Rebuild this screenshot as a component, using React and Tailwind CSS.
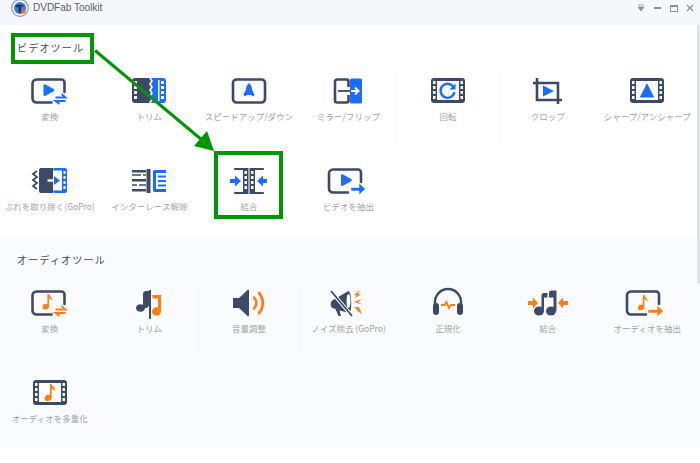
import React from 'react';

const DARK = '#3c4a68';
const BLUE = '#1a6dff';
const ORANGE = '#ff7f14';

// Screen outline with a notch at the bottom right, shared by convert/extract icons
const Screen = () => (
    <path d="M21 24.500H6a4 4 0 0 1-4-4V5.500a4 4 0 0 1 4-4h25a3 3 0 0 1 3 3V14" fill="none" stroke={DARK} strokeWidth="2.600" strokeLinecap="round" />
);

const Note = ({ x = 0, y = 0, s = 1, color = ORANGE }) => (
    <path transform={`translate(${x} ${y}) scale(${s})`} d="M6 0h2c.4 3 4.500 4 4 8.500-.8-2-2.500-3-4-3.200V15c0 2.500-2 4-4.500 4S0 17.800 0 15.800 2 12 4 12c.7 0 1.400.1 2 .4z" fill={color} />
);

const Swap = ({ color }) => (
    <g fill="none" stroke={color} strokeWidth="1.800">
        <path d="M25 19.500h10l-4-3.500" />
        <path d="M35 23h-10l4 3" />
    </g>
);

const FilmFrame = ({ children }) => (
    <>
        <rect x="1" y="0" width="34" height="25" rx="3" fill={DARK} />
        <rect x="7" y="3" width="22" height="19" fill="#fff" />
        {[3, 8, 13, 18].map(y => (
            <g key={y} fill="#fff">
                <rect x="3" y={y} width="2.500" height="3" />
                <rect x="30.500" y={y} width="2.500" height="3" />
            </g>
        ))}
        {children}
    </>
);

const ConvertVideo = () => (
    <g transform="translate(-1.500 0)">
        <Screen />
        <path d="M13 7.500c0-1 1-1.500 2-1l8 4.500c1 .6 1 1.700 0 2.300l-8 4.500c-1 .5-2 0-2-1z" fill={BLUE} />
        <Swap color={BLUE} />
    </g>
);

const TrimVideo = () => (
    <>
        <path d="M4 0h14l2 3-2 3 2 3-2 3 2 3-2 3 2 3-2 4H4a3 3 0 0 1-3-3V3a3 3 0 0 1 3-3z" fill={DARK} />
        <path d="M20 0h12a3 3 0 0 1 3 3v19a3 3 0 0 1-3 3H20l2-4-2-3 2-3-2-3 2-3-2-3 2-3z" fill={BLUE} />
        {[3, 8, 13, 18].map(y => (
            <g key={y} fill="#fff">
                <rect x="3" y={y} width="3" height="3" />
                <rect x="30" y={y} width="3" height="3" />
            </g>
        ))}
        <rect x="27" y="2" width="1.500" height="21" fill="#fff" />
    </>
);

const Speed = () => (
    <>
        <rect x="2" y="1.500" width="32" height="23" rx="3.500" fill="none" stroke={DARK} strokeWidth="2.600" />
        <path d="M18 5c2 1.800 3 4 3 6.500l2.500 5-1 2-2.500-1.500h-4L13.500 18.500l-1-2 2.500-5C15 9 16 6.800 18 5z" fill={BLUE} />
    </>
);

const Mirror = () => (
    <>
        <path d="M18.500 9V3.500a2 2 0 0 0-2-2H7a2 2 0 0 0-2 2v19a2 2 0 0 0 2 2h9.500a2 2 0 0 0 2-2V17" fill="none" stroke={DARK} strokeWidth="2.600" />
        <rect x="20" y="0.500" width="12" height="25" rx="1.500" fill={BLUE} />
        <path d="M8 13h13" stroke={DARK} strokeWidth="1.800" />
        <path d="M21 13h7m-3-3.500l3.500 3.500-3.500 3.500" fill="none" stroke="#fff" strokeWidth="2" />
    </>
);

const Rotate = () => (
    <FilmFrame>
        <path d="M23.500 9a7 7 0 1 0 1 5" fill="none" stroke={BLUE} strokeWidth="2.300" />
        <path d="M25.500 5.500v6h-6z" fill={BLUE} />
    </FilmFrame>
);

const Crop = () => (
    <>
        <path d="M7 0v22h25M3 5h25v21" fill="none" stroke={DARK} strokeWidth="2.600" />
        <path d="M13 7.500l11 5.500-11 5.500z" fill={BLUE} />
    </>
);

const Sharp = () => (
    <FilmFrame>
        <path d="M18 6l6.500 13h-13z" fill={BLUE} stroke={BLUE} strokeWidth="1" />
    </FilmFrame>
);

const Stabilize = () => (
    <>
        <path d="M5 3L1 6l4 3-4 3 4 3-4 3 4 3" fill="none" stroke={DARK} strokeWidth="1.800" />
        <path d="M9 0h12v25H9a2 2 0 0 1-2-2V2a2 2 0 0 1 2-2z" fill={DARK} />
        <rect x="21" y="0" width="14" height="25" rx="2" fill={BLUE} />
        <rect x="21" y="2.500" width="9" height="20" fill="#fff" />
        {[3, 8, 13, 18].map(y => <rect key={y} x="31.500" y={y} width="2" height="3" fill="#fff" />)}
        <path d="M15.500 12.500h6" stroke="#fff" strokeWidth="2.400" />
        <path d="M22 8l6 4.500-6 4.500z" fill={BLUE} />
    </>
);

const Deinterlace = () => (
    <>
        <path d="M1 2h14v2.500H1zM1 11h14v2.500H1zM1 21h14v2.500H1z" fill={DARK} />
        <path d="M1 7h9M12 7h3M1 17h5M8 17h7" stroke={DARK} strokeWidth="1.600" />
        <rect x="15.500" y="1" width="4" height="24" fill={DARK} />
        <path d="M22 3.500a1.500 1.500 0 0 1 1.500-1.500H35v3H25v16h10v3H23.500a1.500 1.500 0 0 1-1.500-1.500z" fill={BLUE} />
        <path d="M27 8.500h8M27 13h8M27 17.500h8" stroke={BLUE} strokeWidth="2" />
    </>
);

const MergeVideo = () => (
    <>
        <path d="M4 1h10M4 25h10M22 1h10M22 25h10" stroke={DARK} strokeWidth="2.200" strokeLinecap="round" />
        <rect x="12" y="0" width="5.500" height="26" fill={DARK} />
        <rect x="18.500" y="0" width="5.500" height="26" fill={DARK} />
        {[3, 8, 13, 18].map(y => (
            <g key={y} fill="#fff">
                <rect x="13.500" y={y} width="2.500" height="3" />
                <rect x="20" y={y} width="2.500" height="3" />
            </g>
        ))}
        <path d="M-1 11h5V7.500l6 5.500-6 5.500V15h-5z" fill={BLUE} />
        <path d="M36 11h-4V7.500L26 13l6 5.500V15h4z" fill={BLUE} />
    </>
);

const ExtractVideo = () => (
    <g transform="translate(-3 0)">
        <Screen />
        <path d="M14 7.500c0-1 1-1.500 2-1l8 4.500c1 .6 1 1.700 0 2.300l-8 4.500c-1 .5-2 0-2-1z" fill={BLUE} />
        <path d="M24 19.500h8V15l6.500 6-6.500 6v-4h-8z" fill={BLUE} stroke="#fff" strokeWidth=".6" />
    </g>
);

const ConvertAudio = () => (
    <g transform="translate(-1.500 0)">
        <Screen />
        <Note x={12} y={4} s={0.82} />
        <Swap color={ORANGE} />
    </g>
);

const TrimAudio = () => (
    <>
        <ellipse cx="9.500" cy="18" rx="4.500" ry="3.800" fill={DARK} />
        <path d="M12 18V4c0-2 1.500-3 3-3h3.500v14l-2.500 3z" fill={DARK} />
        <rect x="18" y="0" width="2" height="29" fill={DARK} />
        <path d="M21.500 5h8.500v16h-3V8.500h-5.500z" fill={ORANGE} />
        <ellipse cx="25.500" cy="21.500" rx="4.500" ry="4.200" fill={ORANGE} />
    </>
);

const Volume = () => (
    <>
        <path d="M2 8h6l8-7.500a1 1 0 0 1 2 .5v24a1 1 0 0 1-2 .5L8 18H2z" fill={DARK} />
        <path d="M23 7.500c3 3.500 3 7.500 0 11" fill="none" stroke={ORANGE} strokeWidth="2.600" strokeLinecap="round" />
        <path d="M28 3c5 5.500 5 14.500 0 20" fill="none" stroke={ORANGE} strokeWidth="2.800" strokeLinecap="round" />
    </>
);

const Denoise = () => (
    <>
        <path d="M3 10c-3 2-3 6-.5 8l3 1 3 7h2.500l-1.500-5.500 10 2.500c2.500-2 2.500-20-1-22z" fill={DARK} />
        <ellipse cx="18.500" cy="11" rx="2" ry="7" fill="#fbfcff" />
        <path d="M0 0l22 26" stroke="#fbfcff" strokeWidth="3.600" />
        <path d="M1 1l21 25" stroke={DARK} strokeWidth="1.800" />
        <path d="M30 0l-6 5 3 .5-3 3 7-4-3-.5zM32 9l-8 3 8 2.500-3.500-2.500zM24 17l3 2-1 .5 6 5-3-7.500z" fill={ORANGE} />
    </>
);

const Normalize = () => (
    <>
        <path d="M5 16V12a13 13 0 0 1 26 0v4" fill="none" stroke={DARK} strokeWidth="2.400" />
        <rect x="3" y="13" width="6" height="12" rx="3" fill={DARK} />
        <rect x="27" y="13" width="6" height="12" rx="3" fill={DARK} />
        <path d="M11 15h3.500l2-3 2.500 6 2-3h4" fill="none" stroke={ORANGE} strokeWidth="1.800" />
    </>
);

const MergeAudio = () => (
    <>
        <path d="M-2 11h5V7.500l5 5.500-5 5.500V15h-5z" fill={ORANGE} />
        <path d="M38 11h-5V7.500L28 13l5 5.500V15h5z" fill={ORANGE} />
        <ellipse cx="9" cy="21" rx="5" ry="4.500" fill={DARK} />
        <ellipse cx="21" cy="21" rx="5" ry="4.500" fill={DARK} />
        <path d="M11.500 21V5.500c0-1.500 1-2.500 2.500-2.500h3.500v4.500H14V21z" fill={DARK} />
        <path d="M23.500 21V7.500H19V3c0-1.500 1-2.500 2.500-2.500h5V21z" fill={DARK} />
    </>
);

const ExtractAudio = () => (
    <g transform="translate(-4 0)">
        <Screen />
        <Note x={13} y={5} s={0.8} />
        <path d="M23 19.500h9V15l6.500 6-6.500 6v-4h-9z" fill={ORANGE} stroke="#fff" strokeWidth=".6" />
    </g>
);

const MuxAudio = () => (
    <FilmFrame>
        <Note x={12.500} y={4} s={0.9} />
    </FilmFrame>
);

const videoTools = [
    { label: '変換', Icon: ConvertVideo },
    { label: 'トリム', Icon: TrimVideo },
    { label: 'スピードアップ/ダウン', Icon: Speed },
    { label: 'ミラー/フリップ', Icon: Mirror },
    { label: '回転', Icon: Rotate, raised: true },
    { label: 'クロップ', Icon: Crop },
    { label: 'シャープ/アンシャープ', Icon: Sharp },
    { label: 'ぶれを取り除く(GoPro)', Icon: Stabilize },
    { label: 'インターレース解除', Icon: Deinterlace },
    { label: '結合', Icon: MergeVideo },
    { label: 'ビデオを抽出', Icon: ExtractVideo },
];

const audioTools = [
    { label: '変換', Icon: ConvertAudio },
    { label: 'トリム', Icon: TrimAudio },
    { label: '音量調整', Icon: Volume, raised: true },
    { label: 'ノイズ除去 (GoPro)', Icon: Denoise },
    { label: '正規化', Icon: Normalize },
    { label: '結合', Icon: MergeAudio },
    { label: 'オーディオを抽出', Icon: ExtractAudio },
    { label: 'オーディオを多重化', Icon: MuxAudio },
];

const Tile = ({ label, Icon, raised }) => (
    <div className={`h-[80px] flex flex-col items-center pt-[10px] ${raised ? 'shadow-[-5px_0_6px_-5px_rgba(60,74,104,0.04),5px_0_6px_-5px_rgba(60,74,104,0.04)]' : ''}`}>
        <svg width="40" height="27" viewBox="-2 0 40 27" className="shrink-0 overflow-visible">
            <Icon />
        </svg>
        <span className="mt-[5px] text-[8.5px] leading-3 text-[#a3a3a3] whitespace-nowrap">{label}</span>
    </div>
);

const Section = ({ title, tools, className }) => (
    <section className={className}>
        <h2 className="pl-[17px] text-[10px] leading-4 font-normal text-[#444b5a] tracking-[1.2px]">{title}</h2>
        <div className="w-[697px] grid grid-cols-7 gap-y-[10px] mt-[12px]">
            {tools.map(tool => <Tile key={tool.label} {...tool} />)}
        </div>
    </section>
);

const App = () => (
    <div className="relative w-[700px] h-[463px] overflow-hidden bg-white font-['Noto_Sans_CJK_JP','Liberation_Sans',sans-serif]">
        <header className="h-[25px] bg-[#f5f7fa] flex items-center pl-[11px] pr-[6px] pb-[9px] overflow-hidden">
            <svg width="18" height="18" viewBox="0 0 18 18" className="shrink-0">
                <circle cx="9" cy="9" r="8.300" fill="#fff" stroke="#6f9be8" strokeWidth="1.200" />
                <circle cx="9" cy="9" r="6" fill="#3f78d0" />
                <path d="M4 7.500c2.500-2.500 6-2.500 9-.5l-3 .5v6H7.500V8.500z" fill="#17346e" />
                <circle cx="12.500" cy="12.500" r="2.200" fill="#ee6b2f" />
            </svg>
            <span className="ml-[4px] text-[10px] leading-4 text-[#5a5f69] font-['Liberation_Sans',sans-serif]">DVDFab Toolkit</span>
            <div className="ml-auto flex items-center gap-[8px]">
                <svg width="8" height="8" viewBox="0 0 8 8"><path d="M1 1h6M1 3h6L4 7z" fill="#8a8f98" stroke="#8a8f98" strokeWidth=".7" /></svg>
                <div className="w-[7px] h-[1.500px] ml-[1px] bg-[#8a8f98]" />
                <div className="w-[8px] h-[7px] ml-[1px] border border-t-2 border-[#8a8f98]" />
                <svg width="8" height="8" viewBox="0 0 8 8"><path d="M1 1l6 6M7 1L1 7" stroke="#8a8f98" strokeWidth="1.200" /></svg>
            </div>
        </header>

        <Section title="ビデオツール" tools={videoTools} className="h-[213px] pt-[15px]" />
        <Section title="オーディオツール" tools={audioTools} className="h-[210px] pt-[14px] bg-[#f9fbff]" />

        {/* scrollbar */}
        <div className="absolute right-0 top-[25px] w-[3px] h-[258px] bg-[#dfe1e5]" />

        {/* green annotation */}
        <div className="absolute left-[11px] top-[33px] w-[83px] h-[31px] border-[4px] border-[#009600]" />
        <div className="absolute left-[214px] top-[151px] w-[69px] h-[68px] border-[4px] border-[#009600]" />
        <svg width="700" height="463" className="absolute left-0 top-0 pointer-events-none">
            <path d="M95 50.500L202 140" stroke="#009600" strokeWidth="3" />
            <path d="M214 151l-20-5 13-15z" fill="#009600" />
        </svg>
    </div>
);

export default App;
